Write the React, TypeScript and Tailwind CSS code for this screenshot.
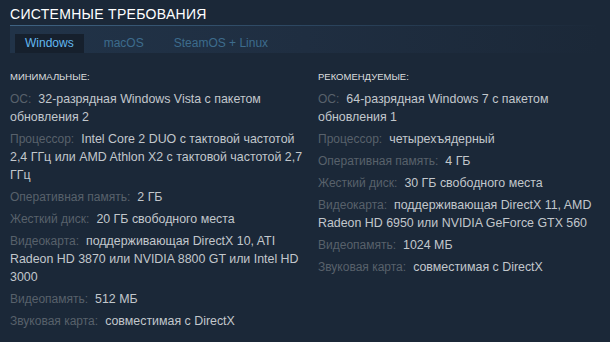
import React from "react";

type Row = { label: string; value: string };

const minRows: Row[] = [
  { label: "ОС:", value: "32-разрядная Windows Vista с пакетом обновления 2" },
  { label: "Процессор:", value: "Intel Core 2 DUO с тактовой частотой 2,4 ГГц или AMD Athlon X2 с тактовой частотой 2,7 ГГц" },
  { label: "Оперативная память:", value: "2 ГБ" },
  { label: "Жесткий диск:", value: "20 ГБ свободного места" },
  { label: "Видеокарта:", value: "поддерживающая DirectX 10, ATI Radeon HD 3870 или NVIDIA 8800 GT или Intel HD 3000" },
  { label: "Видеопамять:", value: "512 МБ" },
  { label: "Звуковая карта:", value: "совместимая с DirectX" },
];

const recRows: Row[] = [
  { label: "ОС:", value: "64-разрядная Windows 7 с пакетом обновления 1" },
  { label: "Процессор:", value: "четырехъядерный" },
  { label: "Оперативная память:", value: "4 ГБ" },
  { label: "Жесткий диск:", value: "30 ГБ свободного места" },
  { label: "Видеокарта:", value: "поддерживающая DirectX 11, AMD Radeon HD 6950 или NVIDIA GeForce GTX 560" },
  { label: "Видеопамять:", value: "1024 МБ" },
  { label: "Звуковая карта:", value: "совместимая с DirectX" },
];

function Col({ title, rows }: { title: string; rows: Row[] }) {
  return (
    <div>
      <div className="text-[9.5px] leading-[12px] text-[#dcdedf] uppercase mb-[7px]">{title}</div>
      <ul>
        {rows.map((r) => (
          <li key={r.label} className="text-[12.4px] leading-[18px] mb-[4px] text-[#c2c7cc]">
            <span className="text-[12px] text-[#58616b] mr-[7px]">{r.label}</span>
            <span>{r.value}</span>
          </li>
        ))}
      </ul>
    </div>
  );
}

export default function App() {
  return (
    <div
      className="w-[610px] h-[342px] bg-[#1b2838] overflow-hidden"
      style={{ fontFamily: '"Liberation Sans", Arial, sans-serif' }}
    >
      <div className="px-[10px] pt-[4px]">
        <div className="text-[14px] leading-[20px] text-white uppercase tracking-[0.3px]">Системные требования</div>
        <div className="mt-[1px] h-[1px] bg-gradient-to-r from-[#3f6382] via-[#2c4660] to-[#1b2838]" />
        <div className="h-[27px] flex items-end pl-[5px] bg-gradient-to-r from-[#213348] via-[#1f2e41] to-[#1b2838]">
          <div className="h-[19px] px-[10px] bg-[#16202d] text-[12px] leading-[19px] text-[#62b8f0]">Windows</div>
          <div className="h-[19px] px-[10px] ml-[10px] text-[12px] leading-[19px] text-[#3d6c8d]">macOS</div>
          <div className="h-[19px] px-[10px] ml-[10px] text-[12px] leading-[19px] text-[#3d6c8d]">SteamOS + Linux</div>
        </div>
        <div className="grid grid-cols-[298px_282px] gap-x-[10px] pt-[18px]">
          <Col title="Минимальные:" rows={minRows} />
          <Col title="Рекомендуемые:" rows={recRows} />
        </div>
      </div>
    </div>
  );
}
